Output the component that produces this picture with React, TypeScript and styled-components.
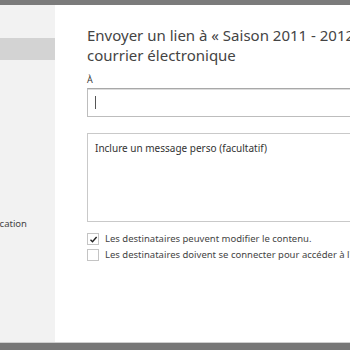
import styled, { createGlobalStyle } from 'styled-components'

const Global = createGlobalStyle`
  html, body { margin: 0; padding: 0; }
  body {
    width: 350px;
    height: 350px;
    overflow: hidden;
    font-family: "Noto Sans", "Open Sans", sans-serif;
    color: #333;
  }
`

const Frame = styled.div`
  width: 350px;
  height: 350px;
  display: flex;
  flex-direction: column;
  background: #7b7b7b;
`

const TopBar = styled.div`
  height: 5px;
  background: #7b7b7b;
`

const Body = styled.div`
  flex: 1;
  display: flex;
  min-height: 0;
  background: #fff;
`

const BottomBar = styled.div`
  height: 7px;
  background: #777;
  border-top: 1px solid #cfcfcf;
`

const Sidebar = styled.div`
  width: 55px;
  flex-shrink: 0;
  background: #f2f2f2;
  overflow: hidden;
  padding-top: 33px;
  display: flex;
  flex-direction: column;
`

const SideItem = styled.div<{ $active?: boolean; $top?: number }>`
  height: 22px;
  margin-top: ${(p) => p.$top ?? 0}px;
  background: ${(p) => (p.$active ? '#d3d3d3' : 'transparent')};
  font-size: 9.5px;
  line-height: 22px;
  color: #444;
  white-space: nowrap;
  text-indent: -25px;
`

const Main = styled.div`
  flex: 1;
  padding: 20px 0 0 32px;
  overflow: hidden;
  display: flex;
  flex-direction: column;
`

const Title = styled.h1`
  margin: 0;
  font-size: 15px;
  font-weight: 400;
  line-height: 20px;
  color: #444;
  white-space: nowrap;
`

const Label = styled.div`
  margin-top: 9px;
  font-size: 9px;
  line-height: 12px;
  color: #333;
`

const Input = styled.div`
  margin-top: 2px;
  height: 29px;
  width: 300px;
  border: 1px solid #bdbdbd;
  border-top-color: #a8a8a8;
  box-shadow: inset 0 1px 0 #dcdcdc;
  display: flex;
  align-items: center;
  padding-left: 7px;
  box-sizing: border-box;
`

const Caret = styled.div`
  width: 1px;
  height: 13px;
  background: #555;
`

const Message = styled.div`
  margin-top: 16px;
  height: 89px;
  width: 300px;
  border: 1px solid #c9c9c9;
  box-sizing: border-box;
  padding: 8px 7px;
  font-size: 10px;
  line-height: 13px;
  color: #333;
  white-space: nowrap;
`

const Options = styled.div`
  margin-top: 11px;
  display: flex;
  flex-direction: column;
  gap: 4px;
`

const Option = styled.label`
  display: flex;
  align-items: center;
  gap: 6px;
  font-size: 9.5px;
  line-height: 12px;
  color: #444;
  white-space: nowrap;
`

const Box = styled.span`
  width: 10px;
  height: 10px;
  border: 1px solid #c4c4c4;
  background: #fff;
  flex-shrink: 0;
  display: flex;
  align-items: center;
  justify-content: center;
`

function Check({ checked }: { checked?: boolean }) {
  return (
    <Box>
      {checked && (
        <svg width="9" height="9" viewBox="0 0 9 9">
          <path d="M1.5 4.8 L3.5 6.8 L7.6 2" fill="none" stroke="#222" strokeWidth="1.4" />
        </svg>
      )}
    </Box>
  )
}

export default function App() {
  return (
    <>
      <Global />
      <Frame>
        <TopBar />
        <Body>
          <Sidebar>
            <SideItem $active> </SideItem>
            <SideItem $top={153}>Notification</SideItem>
          </Sidebar>
          <Main>
            <Title>Envoyer un lien à « Saison 2011 - 2012 » par</Title>
            <Title>courrier électronique</Title>
            <Label>À</Label>
            <Input>
              <Caret />
            </Input>
            <Message>Inclure un message perso (facultatif)</Message>
            <Options>
              <Option>
                <Check checked />
                Les destinataires peuvent modifier le contenu.
              </Option>
              <Option>
                <Check />
                Les destinataires doivent se connecter pour accéder à l'élément.
              </Option>
            </Options>
          </Main>
        </Body>
        <BottomBar />
      </Frame>
    </>
  )
}
